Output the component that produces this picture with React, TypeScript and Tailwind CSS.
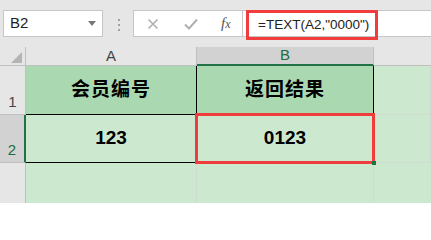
import React from "react";

const FONT = '"Liberation Sans", Arial, "Noto Sans CJK SC", sans-serif';

function NameBox() {
  return (
    <div className="ml-[3px] flex h-[27px] w-[100px] items-center justify-between border border-[#c6c6c6] bg-white pl-[6px] pr-[6px]">
      <span className="text-[15px] text-[#222]">B2</span>
      <span className="h-0 w-0 border-x-[4px] border-t-[5px] border-x-transparent border-t-[#777]" />
    </div>
  );
}

function FormulaControls() {
  return (
    <div className="flex h-[27px] w-[110px] items-center border border-[#c6c6c6] bg-white">
      <svg className="ml-[13px]" width="12" height="12" viewBox="0 0 12 12">
        <path d="M1.5 1.5 L10.5 10.5 M10.5 1.5 L1.5 10.5" stroke="#b0b0b0" strokeWidth="1.6" />
      </svg>
      <svg className="ml-[25px]" width="14" height="12" viewBox="0 0 14 12">
        <path d="M1 6.5 L5 10.5 L13 1.5" stroke="#b0b0b0" strokeWidth="2" fill="none" />
      </svg>
      <span
        className="ml-[23px] text-[15px] italic text-[#555]"
        style={{ fontFamily: '"Liberation Serif", serif' }}
      >
        f<span className="text-[12px]">x</span>
      </span>
    </div>
  );
}

function Toolbar() {
  return (
    <div className="flex h-[47px] shrink-0 items-start pt-[10px]">
      <NameBox />
      <div className="ml-[15px] mt-[9px] flex flex-col gap-[3px]">
        <span className="h-[2px] w-[2px] bg-[#a0a0a0]" />
        <span className="h-[2px] w-[2px] bg-[#a0a0a0]" />
        <span className="h-[2px] w-[2px] bg-[#a0a0a0]" />
      </div>
      <div className="ml-[13px]">
        <FormulaControls />
      </div>
      <div className="relative h-[27px] flex-1 border-y border-[#c6c6c6] bg-white">
        <div className="absolute left-[3px] top-[-1px] flex h-[30px] w-[132px] items-center border-[3px] border-[#f03c3c] pl-[9px] text-[13.5px] text-[#222]">
          =TEXT(A2,"0000")
        </div>
      </div>
    </div>
  );
}

const grid = "border-b border-r border-[#d0dcd1]";

function Sheet() {
  return (
    <div className="grid h-full grid-cols-[26px_171px_177px_1fr] grid-rows-[19px_49px_48px_1fr] text-black">
      {/* header row */}
      <div className="relative border-b border-r border-[#c0c0c0] bg-[#e6e6e6]">
        <span className="absolute bottom-[2px] right-[3px] h-0 w-0 border-b-[11px] border-l-[11px] border-b-[#b4b4b4] border-l-transparent" />
      </div>
      <div className="flex items-center justify-center border-b border-r border-[#c0c0c0] bg-[#e6e6e6] text-[15px] text-[#444]">
        A
      </div>
      <div className="flex items-center justify-center border-b-2 border-r border-b-[#217346] border-r-[#c0c0c0] bg-[#d2d2d2] text-[15px] text-[#1e6b3f]">
        B
      </div>
      <div className="border-b border-[#c0c0c0] bg-[#e6e6e6]" />

      {/* row 1 */}
      <div className="flex items-end justify-center border-b border-r border-[#c0c0c0] bg-[#e6e6e6] pb-[1px] text-[15px] text-[#444]">
        1
      </div>
      <div className="flex items-center justify-center border-b border-r border-black bg-[#aad9b1] text-[19px] font-bold tracking-[1px]">
        会员编号
      </div>
      <div className="flex items-center justify-center border-b border-r border-black bg-[#aad9b1] text-[19px] font-bold tracking-[1px]">
        返回结果
      </div>
      <div className={`${grid} bg-[#cce8cf]`} />

      {/* row 2 */}
      <div className="flex items-end justify-center border-b border-r-2 border-b-[#c0c0c0] border-r-[#217346] bg-[#d2d2d2] pb-[1px] text-[15px] text-[#1e6b3f]">
        2
      </div>
      <div className="flex items-center justify-center border-b border-r border-black bg-[#cce8cf] text-[19px] font-bold">
        123
      </div>
      <div className="relative flex items-center justify-center border-b border-r border-black bg-[#cce8cf] text-[19px] font-bold">
        0123
        <span className="absolute -bottom-[2px] -left-[2px] -right-[2px] -top-[2px] border-[3px] border-[#f03c3c]" />
        <span className="absolute -bottom-[3px] -right-[3px] h-[4px] w-[4px] bg-[#217346]" />
      </div>
      <div className={`${grid} bg-[#cce8cf]`} />

      {/* row 3 */}
      <div className="border-r border-[#c0c0c0] bg-[#e6e6e6]" />
      <div className="border-r border-[#d0dcd1] bg-[#cce8cf]" />
      <div className="border-r border-[#d0dcd1] bg-[#cce8cf]" />
      <div className="bg-[#cce8cf]" />
    </div>
  );
}

export default function App() {
  return (
    <div className="flex h-[203px] w-[431px] flex-col overflow-hidden bg-[#e6e6e6]" style={{ fontFamily: FONT }}>
      <Toolbar />
      <div className="min-h-0 flex-1">
        <Sheet />
      </div>
    </div>
  );
}
